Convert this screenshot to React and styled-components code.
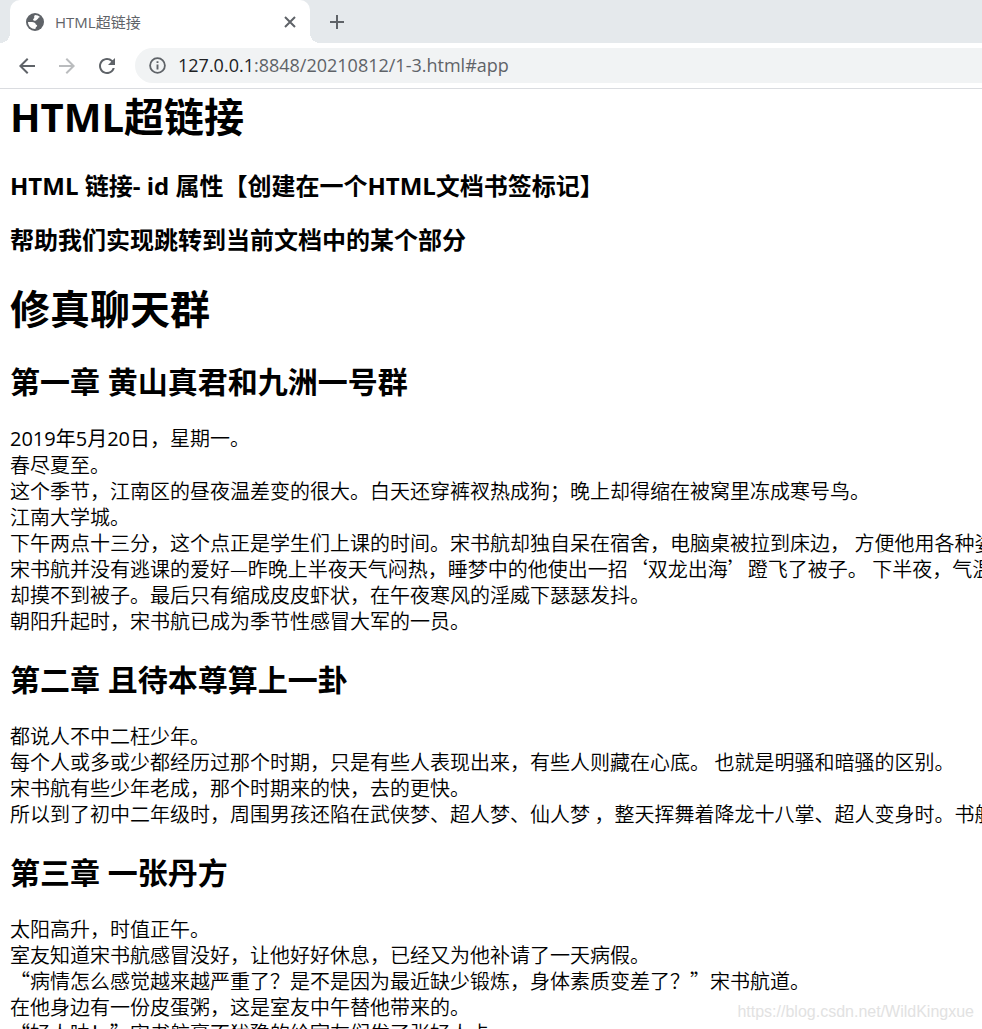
import styled, { createGlobalStyle } from "styled-components";
import { MdArrowBack, MdArrowForward, MdRefresh } from "react-icons/md";

const chapters = [
  {
    title: "第一章 黄山真君和九洲一号群",
    date: "2019年5月20日，",
    lines: [
      "星期一。",
      "春尽夏至。",
      "这个季节，江南区的昼夜温差变的很大。白天还穿裤衩热成狗；晚上却得缩在被窝里冻成寒号鸟。",
      "江南大学城。",
      "下午两点十三分，这个点正是学生们上课的时间。宋书航却独自呆在宿舍，电脑桌被拉到床边， 方便他用各种姿",
      "宋书航并没有逃课的爱好—昨晚上半夜天气闷热，睡梦中的他使出一招‘双龙出海’蹬飞了被子。 下半夜，气温",
      "却摸不到被子。最后只有缩成皮皮虾状，在午夜寒风的淫威下瑟瑟发抖。",
      "朝阳升起时，宋书航已成为季节性感冒大军的一员。",
    ],
  },
  {
    title: "第二章 且待本尊算上一卦",
    lines: [
      "都说人不中二枉少年。",
      "每个人或多或少都经历过那个时期，只是有些人表现出来，有些人则藏在心底。 也就是明骚和暗骚的区别。",
      "宋书航有些少年老成，那个时期来的快，去的更快。",
      "所以到了初中二年级时，周围男孩还陷在武侠梦、超人梦、仙人梦 ，整天挥舞着降龙十八掌、超人变身时。书航",
    ],
  },
  {
    title: "第三章 一张丹方",
    lines: [
      "太阳高升，时值正午。",
      "室友知道宋书航感冒没好，让他好好休息，已经又为他补请了一天病假。",
      "“病情怎么感觉越来越严重了？是不是因为最近缺少锻炼，身体素质变差了？”宋书航道。",
      "在他身边有一份皮蛋粥，这是室友中午替他带来的。",
      "“好人呐！”宋书航毫不犹豫的给室友们发了张好人卡。",
    ],
  },
];

function GlobeIcon() {
  return (
    <svg width="18" height="18" viewBox="0 0 18 18" aria-hidden="true">
      <circle cx="9" cy="9" r="9" fill="currentColor" />
      <path
        fill="#fff"
        d="M9 2c2 0 3.800.7 5 2l-1.500.8c-.3 1.200-1.300 1.200-1.900 2.300-.7 1.100-2.200.8-3.300.2C6.600 6.300 7.800 5.800 8.200 5 8.600 4.200 7.400 3.400 9 2zM2 9l4 .1c2 .1 3.800 1 3.800 2.300 1.900.4 1.700 1.900.2 2.500L9.300 16C5.200 16.100 2 13 2 9z"
      />
    </svg>
  );
}

function CloseIcon() {
  return (
    <svg width="12" height="12" viewBox="0 0 12 12" aria-hidden="true">
      <path d="M1 1l10 10M11 1L1 11" stroke="currentColor" strokeWidth="2" />
    </svg>
  );
}

function PlusIcon() {
  return (
    <svg width="16" height="16" viewBox="0 0 16 16" aria-hidden="true">
      <path d="M8 1v14M1 8h14" stroke="currentColor" strokeWidth="2" />
    </svg>
  );
}

function InfoIcon() {
  return (
    <svg width="17" height="17" viewBox="0 0 17 17" aria-hidden="true">
      <circle
        cx="8.5"
        cy="8.5"
        r="7.4"
        fill="none"
        stroke="currentColor"
        strokeWidth="1.8"
      />
      <path
        d="M8.500 4.200v1.900M8.500 7.600v5"
        stroke="currentColor"
        strokeWidth="1.900"
      />
    </svg>
  );
}

export default function App() {
  return (
    <Browser>
      <GlobalStyle />
      <TabStrip>
        <Tab>
          <GlobeIcon />
          <TabTitle>HTML超链接</TabTitle>
          <IconButton aria-label="Close tab">
            <CloseIcon />
          </IconButton>
        </Tab>
        <IconButton aria-label="New tab">
          <PlusIcon />
        </IconButton>
      </TabStrip>
      <Toolbar>
        <IconButton aria-label="Back">
          <MdArrowBack size={24} />
        </IconButton>
        <IconButton aria-label="Forward" disabled>
          <MdArrowForward size={24} />
        </IconButton>
        <IconButton aria-label="Reload">
          <MdRefresh size={24} />
        </IconButton>
        <AddressBar>
          <InfoIcon />
          <Url href="#app">
            <b>127.0.0.1</b>:8848/20210812/1-3.html#app
          </Url>
        </AddressBar>
      </Toolbar>
      <Page id="app">
        <Title>HTML超链接</Title>
        <Subtitle>HTML 链接- id 属性【创建在一个HTML文档书签标记】</Subtitle>
        <Subtitle>帮助我们实现跳转到当前文档中的某个部分</Subtitle>
        <Title>修真聊天群</Title>
        {chapters.map((chapter) => (
          <section key={chapter.title}>
            <ChapterTitle>{chapter.title}</ChapterTitle>
            <Text>
              {chapter.date && <DateText>{chapter.date}</DateText>}
              {chapter.lines.join("\n")}
            </Text>
          </section>
        ))}
      </Page>
      <Watermark>https://blog.csdn.net/WildKingxue</Watermark>
    </Browser>
  );
}

const GlobalStyle = createGlobalStyle`
  body {
    margin: 0;
    background: #ffffff;
  }
`;

const Browser = styled.div`
  position: relative;
  display: flex;
  flex-direction: column;
  height: 100vh;
  overflow: hidden;
  font-family: "Open Sans", "Noto Sans CJK SC", sans-serif;
`;

const TabStrip = styled.div`
  display: flex;
  align-items: center;
  gap: 19px;
  height: 43px;
  padding-left: 10px;
  background: #e5e9ec;
`;

const Tab = styled.div`
  position: relative;
  display: flex;
  align-items: center;
  box-sizing: border-box;
  width: 300px;
  height: 43px;
  padding: 0 14px 0 16px;
  border-radius: 10px 10px 0 0;
  background: #ffffff;
  color: #5f6368;

  /* curved feet on both sides of the tab */
  &::before,
  &::after {
    content: "";
    position: absolute;
    bottom: 0;
    width: 10px;
    height: 10px;
  }
  &::before {
    right: 100%;
    background: radial-gradient(circle at 0 0, #e5e9ec 10px, #ffffff 10px);
  }
  &::after {
    left: 100%;
    background: radial-gradient(circle at 100% 0, #e5e9ec 10px, #ffffff 10px);
  }
`;

const TabTitle = styled.span`
  flex: 1;
  padding-left: 11px;
  font-size: 15px;
`;

const IconButton = styled.button`
  display: flex;
  padding: 0;
  border: 0;
  background: none;
  color: #5f6368;

  &:disabled {
    color: #babcbe;
  }
`;

const Toolbar = styled.div`
  display: flex;
  align-items: center;
  gap: 16px;
  height: 45px;
  padding-left: 15px;
  border-bottom: 1px solid #dadce0;
`;

const AddressBar = styled.div`
  display: flex;
  flex: 1;
  align-items: center;
  gap: 12px;
  height: 35px;
  padding-left: 14px;
  border-radius: 18px 0 0 18px;
  background: #f1f3f4;
  color: #5f6368;
`;

const Url = styled.a`
  padding-bottom: 2px;
  font-size: 18px;
  color: #5f6368;
  text-decoration: none;

  & b {
    font-weight: 400;
    color: #202124;
  }
`;

const Page = styled.main`
  flex: 1;
  min-height: 0;
  overflow: hidden;
  padding: 1px 0 0 10px;
  white-space: nowrap;
  color: #000000;
`;

const Title = styled.h1`
  margin: 27px 0;
  font-size: 40px;
  line-height: 53px;

  &:first-child {
    margin-top: 0;
  }
`;

const Subtitle = styled.h3`
  margin: 23px 0;
  font-size: 24px;
  line-height: 31px;
`;

const ChapterTitle = styled.h2`
  margin: 26px 0 23px;
  font-size: 30px;
  line-height: 40px;
`;

const Text = styled.p`
  margin: 20px 0;
  font-family: "Noto Sans CJK SC", sans-serif;
  font-size: 20px;
  font-weight: 350;
  line-height: 26px;
  white-space: pre;
`;

const DateText = styled.span`
  font-family: "Open Sans", "Noto Sans CJK SC", sans-serif;
  font-weight: 400;
`;

const Watermark = styled.span`
  position: absolute;
  right: 8px;
  bottom: 8px;
  font-family: "Liberation Sans", sans-serif;
  font-size: 16px;
  color: #e2e2e2;
`;
